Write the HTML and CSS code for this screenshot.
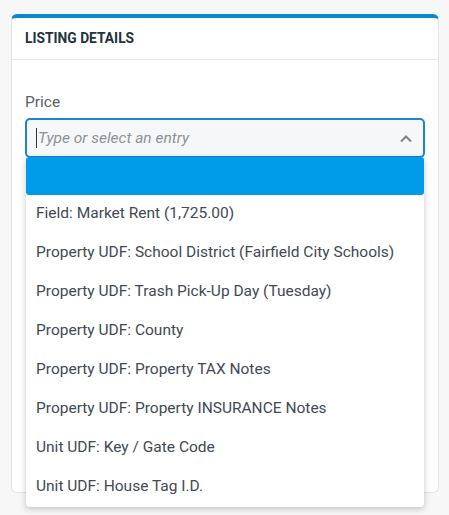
FILE: index.html
```html
<!DOCTYPE html>
<html>
<head>
<meta charset="utf-8">
<link rel="stylesheet" href="styles.css">
</head>
<body>
<div class="card">
  <div class="card-header">LISTING DETAILS</div>
  <div class="card-body">
    <div class="label">Price</div>
    <div class="combo">
      <div class="input">
        <span class="caret"></span>
        <span class="placeholder">Type or select an entry</span>
        <svg class="chev" width="14" height="9" viewBox="0 0 14 9"><path d="M2 7.5 L7 2.5 L12 7.5" fill="none" stroke="#7d8288" stroke-width="2"/></svg>
      </div>
      <ul class="menu">
        <li class="item active"></li>
        <li class="item">Field: Market Rent (1,725.00)</li>
        <li class="item">Property UDF: School District (Fairfield City Schools)</li>
        <li class="item">Property UDF: Trash Pick-Up Day (Tuesday)</li>
        <li class="item">Property UDF: County</li>
        <li class="item">Property UDF: Property TAX Notes</li>
        <li class="item">Property UDF: Property INSURANCE Notes</li>
        <li class="item">Unit UDF: Key / Gate Code</li>
        <li class="item">Unit UDF: House Tag I.D.</li>
      </ul>
    </div>
  </div>
</div>
</body>
</html>
```

FILE: styles.css
```css
html, body {
  margin: 0;
  padding: 0;
}
body {
  background: #f7f7f7;
  font-family: Roboto, "Liberation Sans", sans-serif;
  padding: 14px 10px 0 11px;
  height: 515px;
  box-sizing: border-box;
  overflow: hidden;
}
.card {
  width: 428px;
  height: 479px;
  box-sizing: border-box;
  background: #fff;
  border: 1px solid #e3e4e6;
  border-top: 4px solid #0a87d2;
  border-radius: 6px;
}
.card-header {
  height: 42px;
  box-sizing: border-box;
  border-bottom: 1px solid #e8e9eb;
  padding: 12px 13px 0;
  font-size: 13.8px;
  font-weight: 700;
  color: #263140;
}
.card-body {
  padding: 33px 13px 0;
}
.label {
  font-size: 15.5px;
  color: #5b5f63;
  line-height: 18px;
  margin-bottom: 7px;
}
.combo {
  position: relative;
}
.input {
  height: 40px;
  box-sizing: border-box;
  border: 2px solid #1a86cf;
  border-radius: 5px;
  background: #f6f7f9;
  display: flex;
  align-items: center;
  padding: 0 10px 0 9px;
}
.caret {
  width: 1px;
  height: 20px;
  background: #333;
  margin-right: 1px;
}
.placeholder {
  flex: 1;
  font-size: 15.5px;
  font-style: italic;
  color: #8e9296;
}
.chev {
  margin-top: 1px;
}
.menu {
  position: absolute;
  left: 1px;
  right: 1px;
  top: 39px;
  margin: 0;
  padding: 0;
  list-style: none;
  background: #fff;
  border-radius: 0 0 4px 4px;
  box-shadow: 0 2px 6px rgba(0,0,0,0.22);
}
.item {
  height: 39px;
  line-height: 37px;
  padding-left: 10px;
  font-size: 15.5px;
  color: #414a53;
  white-space: nowrap;
}
.item.active {
  height: 38px;
  background: #009ce9;
  border-radius: 3px;
}
```
